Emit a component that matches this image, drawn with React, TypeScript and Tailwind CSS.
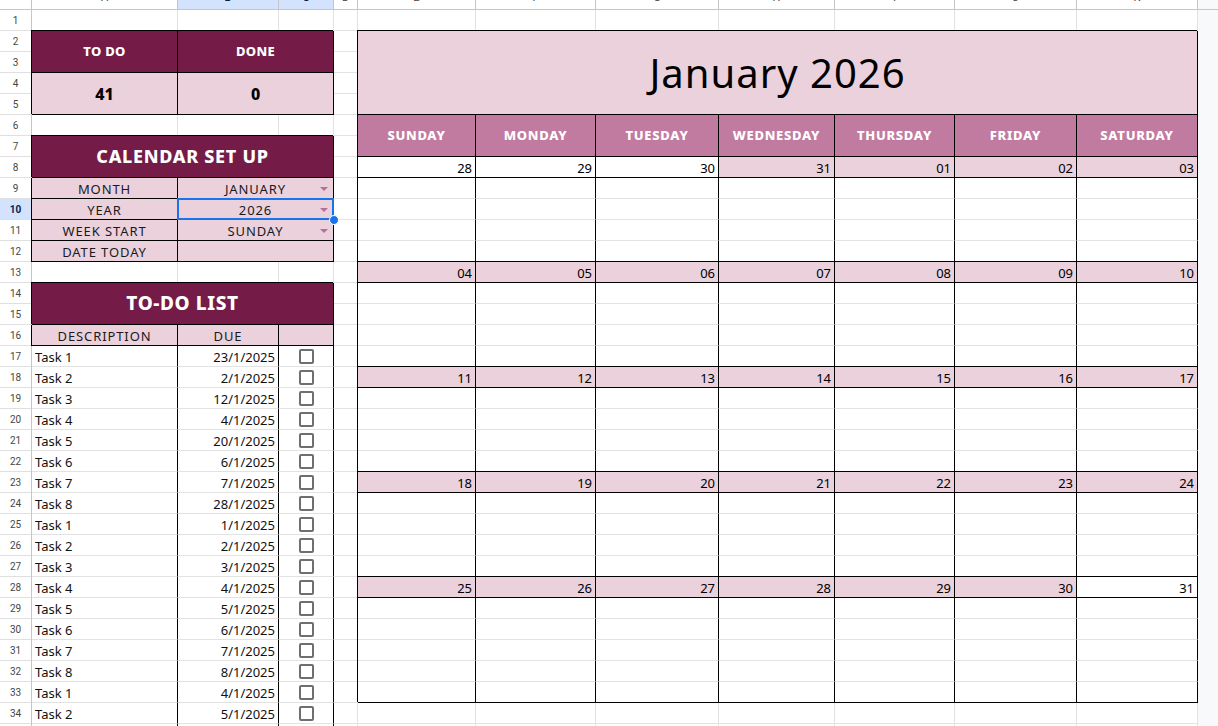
import type { ReactNode } from 'react'

const LEFT_COLS = ['w-[146px]', 'w-[101px]', 'w-[55px]']
const CAL_COLS = ['w-[118px]', 'w-[120px]', 'w-[123px]', 'w-[116px]', 'w-[120px]', 'w-[122px]', 'w-[121px]']
const DAYS = ['SUNDAY', 'MONDAY', 'TUESDAY', 'WEDNESDAY', 'THURSDAY', 'FRIDAY', 'SATURDAY']

const HEADER_COLS = [
  { w: 'w-[146px]', label: 'A', sel: false },
  { w: 'w-[101px]', label: 'B', sel: true },
  { w: 'w-[55px]', label: 'C', sel: true },
  { w: 'w-[24px]', label: 'D', sel: false },
  { w: 'w-[118px]', label: 'E', sel: false },
  { w: 'w-[120px]', label: 'F', sel: false },
  { w: 'w-[123px]', label: 'G', sel: false },
  { w: 'w-[116px]', label: 'H', sel: false },
  { w: 'w-[120px]', label: 'I', sel: false },
  { w: 'w-[122px]', label: 'J', sel: false },
  { w: 'w-[121px]', label: 'K', sel: false },
]

// weeks of the calendar: [day label, pink?]
const WEEKS: { days: [string, boolean][]; blank: number }[] = [
  { days: [['28', false], ['29', false], ['30', false], ['31', true], ['01', true], ['02', true], ['03', true]], blank: 4 },
  { days: [['04', true], ['05', true], ['06', true], ['07', true], ['08', true], ['09', true], ['10', true]], blank: 4 },
  { days: [['11', true], ['12', true], ['13', true], ['14', true], ['15', true], ['16', true], ['17', true]], blank: 4 },
  { days: [['18', true], ['19', true], ['20', true], ['21', true], ['22', true], ['23', true], ['24', true]], blank: 4 },
  { days: [['25', true], ['26', true], ['27', true], ['28', true], ['29', true], ['30', true], ['31', false]], blank: 5 },
]

const TASKS = [
  ['Task 1', '23/1/2025'],
  ['Task 2', '2/1/2025'],
  ['Task 3', '12/1/2025'],
  ['Task 4', '4/1/2025'],
  ['Task 5', '20/1/2025'],
  ['Task 6', '6/1/2025'],
  ['Task 7', '7/1/2025'],
  ['Task 8', '28/1/2025'],
  ['Task 1', '1/1/2025'],
  ['Task 2', '2/1/2025'],
  ['Task 3', '3/1/2025'],
  ['Task 4', '4/1/2025'],
  ['Task 5', '5/1/2025'],
  ['Task 6', '6/1/2025'],
  ['Task 7', '7/1/2025'],
  ['Task 8', '8/1/2025'],
  ['Task 1', '4/1/2025'],
  ['Task 2', '5/1/2025'],
  ['Task 3', '6/1/2025'],
]

const SETUP = [
  { label: 'MONTH', value: 'JANUARY', dropdown: true },
  { label: 'YEAR', value: '2026', dropdown: true, selected: true },
  { label: 'WEEK START', value: 'SUNDAY', dropdown: true },
  { label: 'DATE TODAY', value: '', dropdown: false },
]

/** plain empty sheet row, grey gridlines only */
function GridRow({ cols }: { cols: string[] }) {
  return (
    <div className="flex">
      {cols.map((w, i) => (
        <div key={i} className={`${w} h-[21px] shrink-0 border-r border-b border-[#e2e2e2]`} />
      ))}
    </div>
  )
}

function Caret() {
  return <span className="absolute right-[5px] top-[9px] h-0 w-0 border-x-[4px] border-t-[4px] border-x-transparent border-t-[#b5709a]" />
}

function Banner({ children, size }: { children: ReactNode; size: string }) {
  return (
    <div
      className={`flex h-[42px] w-[302px] items-center justify-center border-r border-b border-black bg-[#741b47] font-extrabold text-white shadow-[-1px_-1px_0_#000] ${size}`}
    >
      {children}
    </div>
  )
}

function LeftPanel() {
  return (
    <div className="flex w-[302px] shrink-0 flex-col">
      <GridRow cols={LEFT_COLS} />

      {/* counters */}
      <div className="flex flex-col shadow-[-1px_-1px_0_#000]">
        <div className="flex h-[42px] bg-[#741b47] text-[13px] font-extrabold tracking-[0.3px] text-white">
          <div className="flex w-[146px] items-center justify-center border-r border-b border-black">TO DO</div>
          <div className="flex w-[156px] items-center justify-center border-r border-b border-black">DONE</div>
        </div>
        <div className="flex h-[42px] bg-[#ead1dc] text-[16px] font-extrabold text-black">
          <div className="flex w-[146px] items-center justify-center border-r border-b border-black">41</div>
          <div className="flex w-[156px] items-center justify-center border-r border-b border-black">0</div>
        </div>
      </div>

      <GridRow cols={LEFT_COLS} />

      <Banner size="text-[18px] tracking-[0.7px]">CALENDAR SET UP</Banner>
      <div className="flex flex-col bg-[#ead1dc] text-[13px] tracking-[0.9px] text-[#1a1a1a] shadow-[-1px_0_0_#000]">
        {SETUP.map((s) => (
          <div key={s.label} className="flex h-[21px]">
            <div className="flex w-[146px] items-end justify-center border-r border-b border-black leading-[17px]">{s.label}</div>
            <div className="relative flex w-[156px] items-end justify-center border-r border-b border-black leading-[17px]">
              {s.value}
              {s.dropdown && <Caret />}
              {s.selected && (
                <>
                  <span className="absolute -top-px -right-px -bottom-px -left-px z-10 border-2 border-[#1a73e8]" />
                  <span className="absolute -right-[6px] -bottom-[6px] z-20 h-[10px] w-[10px] rounded-full border border-white bg-[#1a73e8]" />
                </>
              )}
            </div>
          </div>
        ))}
      </div>

      <GridRow cols={LEFT_COLS} />

      <Banner size="text-[19px] tracking-[0.6px]">TO-DO LIST</Banner>
      <div className="flex h-[21px] bg-[#ead1dc] text-[13px] tracking-[0.9px] text-[#1a1a1a] shadow-[-1px_0_0_#000]">
        <div className="flex w-[146px] items-end justify-center border-r border-b border-black leading-[17px]">DESCRIPTION</div>
        <div className="flex w-[101px] items-end justify-center border-r border-b border-black leading-[17px]">DUE</div>
        <div className="w-[55px] border-r border-b border-black" />
      </div>
      {TASKS.map(([name, due], i) => (
        <div key={i} className="flex h-[21px] text-[13px] text-[#111]">
          <div className="flex w-[146px] items-end border-r border-b border-r-black border-b-[#e2e2e2] pl-[3px] leading-[17px]">{name}</div>
          <div className="flex w-[101px] items-end justify-end border-r border-b border-r-black border-b-[#e2e2e2] pr-[3px] leading-[17px]">
            {due}
          </div>
          <div className="flex w-[55px] items-center justify-center border-r border-b border-r-black border-b-[#e2e2e2]">
            <span className="h-[15px] w-[15px] rounded-[2px] border-2 border-[#6f6f6f]" />
          </div>
        </div>
      ))}
    </div>
  )
}

function Calendar() {
  return (
    <div className="flex w-[840px] shrink-0 flex-col">
      <GridRow cols={CAL_COLS} />

      <div className="flex flex-col shadow-[-1px_-1px_0_#000]">
        <div className="flex h-[84px] items-center justify-center border-r border-b border-black bg-[#ead1dc] pt-[1px] text-[40px] tracking-[1px] text-black">
          January 2026
        </div>
        <div className="flex h-[42px] bg-[#c27ba0] text-[13px] font-extrabold tracking-[0.7px] text-white">
          {DAYS.map((d, i) => (
            <div key={d} className={`${CAL_COLS[i]} flex items-center justify-center border-r border-b border-black`}>
              {d}
            </div>
          ))}
        </div>

        {WEEKS.map((week, wi) => (
          <div key={wi} className="flex flex-col">
            <div className="flex h-[21px] text-[13px] text-black">
              {week.days.map(([n, pink], i) => (
                <div
                  key={i}
                  className={`${CAL_COLS[i]} flex items-end justify-end border-r border-b border-black pr-[3px] leading-[17px] ${
                    pink ? 'bg-[#ead1dc]' : 'bg-white'
                  }`}
                >
                  {n}
                </div>
              ))}
            </div>
            {Array.from({ length: week.blank }, (_, r) => (
              <div key={r} className="flex h-[21px]">
                {CAL_COLS.map((w, i) => (
                  <div
                    key={i}
                    className={`${w} border-r border-b border-r-black ${r === week.blank - 1 ? 'border-b-black' : 'border-b-[#e2e2e2]'}`}
                  />
                ))}
              </div>
            ))}
          </div>
        ))}
      </div>

      <GridRow cols={CAL_COLS} />
      <GridRow cols={CAL_COLS} />
    </div>
  )
}

export default function App() {
  return (
    <div className="h-[726px] w-[1218px] overflow-hidden bg-white font-['Noto_Sans',sans-serif]">
      {/* column letters, scrolled so only their feet show */}
      <div className="flex h-[10px] border-b border-[#c4c7c5] font-['Roboto',sans-serif] text-[11px]">
        <div className="h-full w-[32px] shrink-0 border-r border-[#c4c7c5]" />
        {HEADER_COLS.map((c) => (
          <div
            key={c.label}
            className={`${c.w} h-full shrink-0 overflow-hidden border-r border-[#c4c7c5] ${
              c.sel ? 'bg-[#d3e3fd] font-bold text-[#041e49]' : 'text-[#444746]'
            }`}
          >
            <span className="-mt-[8px] block text-center leading-[11px]">{c.label}</span>
          </div>
        ))}
        <div className="h-full flex-1 bg-[#f8f9fa]" />
      </div>

      <div className="flex">
        <div className="flex w-[32px] shrink-0 flex-col border-r border-[#c4c7c5] font-['Roboto',sans-serif] text-[10px]">
          {Array.from({ length: 35 }, (_, i) => (
            <div
              key={i}
              className={`flex h-[21px] shrink-0 items-center justify-center border-b border-[#e0e0e0] ${
                i === 9 ? 'bg-[#d3e3fd] font-bold text-[#041e49]' : 'text-[#444746]'
              }`}
            >
              {i + 1}
            </div>
          ))}
        </div>

        <LeftPanel />

        <div className="flex w-[24px] shrink-0 flex-col">
          {Array.from({ length: 35 }, (_, i) => (
            <div key={i} className="h-[21px] shrink-0 border-r border-b border-[#e2e2e2]" />
          ))}
        </div>

        <Calendar />

        <div className="w-[20px] shrink-0 bg-[#f8f9fa]" />
      </div>
    </div>
  )
}
